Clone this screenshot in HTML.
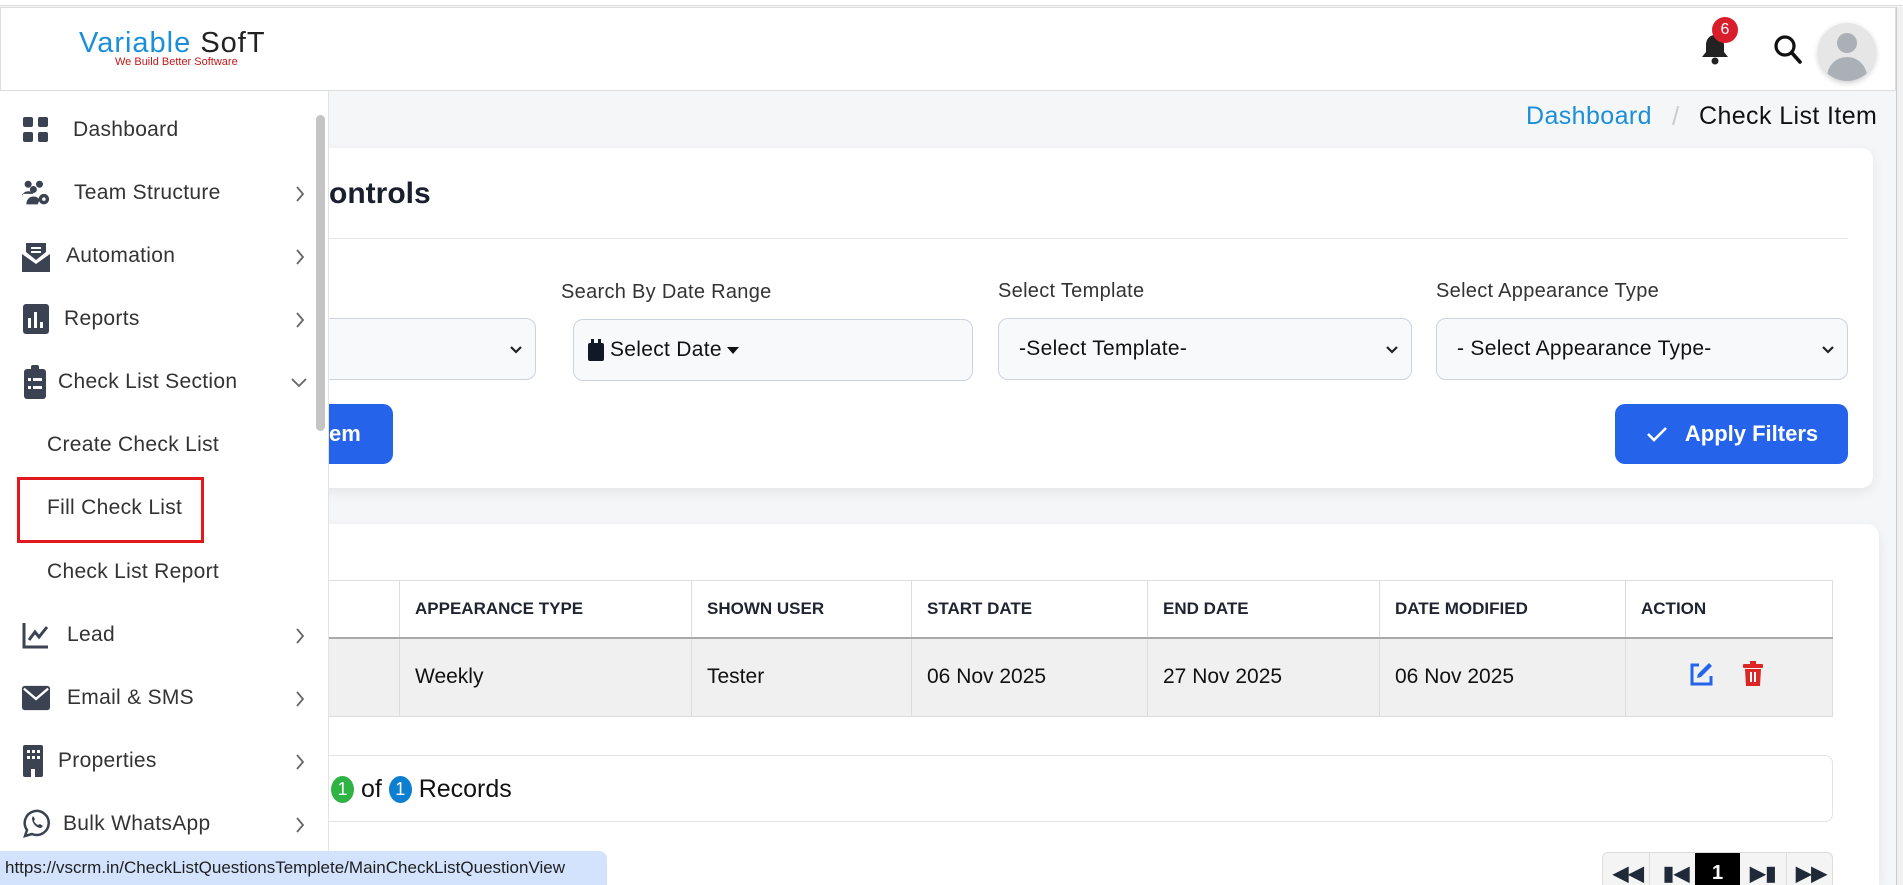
<!DOCTYPE html>
<html style="overflow:hidden;height:885px"><head><meta charset="utf-8"><style>
*{box-sizing:border-box;margin:0;padding:0}
body{width:1903px;height:885px;overflow:hidden;background:#f5f6f8;font-family:"Liberation Sans",sans-serif;position:relative;color:#1f2937}
.a{position:absolute}
.card{background:#fff;border-radius:12px;box-shadow:0 4px 12px rgba(0,0,0,.07)}
.lbl{font-size:20px;color:#333;letter-spacing:.3px}
.inp{background:#f8f9fb;border:1px solid #ccd3de;border-radius:10px;font-size:21px;color:#111;display:flex;align-items:center;padding-left:20px;letter-spacing:.3px}
.chev{position:absolute;right:12px;top:22px}
.side{font-size:21px;color:#333;letter-spacing:.3px}
.si{position:absolute;left:0;width:329px;height:40px;display:flex;align-items:center}
.si .ic{width:28px;margin-left:22px;margin-right:22px;display:flex;justify-content:center}
.si .ar{position:absolute;left:294px;top:12px}
th,td{border:1px solid #ddd;text-align:left}
th{font-size:17px;font-weight:bold;color:#1f2430;height:57px;padding-left:15px}
td{font-size:21px;color:#111;height:79px;padding-left:15px;background:#f0f0f0}
</style></head><body>
<div class="a" style="left:0;top:0;width:1903px;height:6px;background:#fff;border-bottom:1px solid #ddd"></div>
<div class="a" style="left:0;top:7px;width:1896px;height:84px;background:#fff;border:1px solid #ddd"></div>
<div class="a" style="left:79px;top:27px;font-size:29px;letter-spacing:1px"><span style="color:#1a8fd8">Variable</span> <span style="color:#222">SofT</span></div>
<div class="a" style="left:115px;top:56px;font-size:11px;color:#c01818">We Build Better Software</div>
<svg class="a" style="left:1700px;top:32px" width="30" height="34" viewBox="0 0 30 34"><path d="M15 3c-6 0-9 5-9 10v7l-4 5h26l-4-5v-7c0-5-3-10-9-10z" fill="#222"/><circle cx="15" cy="29" r="3.5" fill="#222"/></svg>
<div class="a" style="left:1712px;top:17px;width:26px;height:26px;border-radius:50%;background:#d81e2a;color:#fff;font-size:16px;text-align:center;line-height:26px">6</div>
<svg class="a" style="left:1773px;top:34px" width="30" height="32" viewBox="0 0 30 32"><circle cx="12" cy="12" r="9" fill="none" stroke="#111" stroke-width="3.2"/><path d="M19 19l8 9" stroke="#111" stroke-width="3.6" stroke-linecap="round"/></svg>
<div class="a" style="left:1818px;top:23px;width:58px;height:58px;border-radius:50%;background:#e6e6e6;box-shadow:0 2px 6px rgba(0,0,0,.2);overflow:hidden"><div class="a" style="left:19px;top:10px;width:20px;height:20px;border-radius:50%;background:#aab0b5"></div><div class="a" style="left:9px;top:34px;width:40px;height:26px;border-radius:20px 20px 0 0;background:#aab0b5"></div></div>
<div class="a" style="left:1896px;top:7px;width:7px;height:878px;background:#f0f0f0;border-left:1px solid #ccc"></div>
<div class="a" style="left:1526px;top:102px;font-size:25px;color:#1a8fd8;letter-spacing:.4px">Dashboard</div>
<div class="a" style="left:1672px;top:101px;font-size:26px;color:#ccc">/</div>
<div class="a" style="left:1699px;top:102px;font-size:25px;color:#111;letter-spacing:.4px">Check List Item</div>
<div class="a card" style="left:200px;top:148px;width:1673px;height:340px"></div>
<div class="a" style="left:329px;top:177px;font-size:30px;font-weight:bold;color:#1a1f2e">ontrols</div>
<div class="a" style="left:329px;top:238px;width:1519px;height:1px;background:#e3e6ea"></div>
<div class="a lbl" style="left:561px;top:281px">Search By Date Range</div>
<div class="a lbl" style="left:998px;top:280px">Select Template</div>
<div class="a lbl" style="left:1436px;top:280px">Select Appearance Type</div>
<div class="a inp" style="left:250px;top:318px;width:286px;height:62px"><svg class="chev" width="14" height="18" viewBox="0 0 14 18"><path d="M2 6l5 5 5-5" fill="none" stroke="#222" stroke-width="2.2"/></svg></div>
<div class="a inp" style="left:573px;top:319px;width:400px;height:62px;padding-left:14px"><svg width="16" height="22" viewBox="0 0 16 22" style="margin-right:6px"><rect x="0" y="4" width="16" height="18" rx="2" fill="#111827"/><rect x="3" y="0" width="3" height="6" fill="#111827"/><rect x="10" y="0" width="3" height="6" fill="#111827"/></svg>Select Date<svg width="16" height="12" viewBox="0 0 16 12" style="margin-left:4px"><path d="M1 3h12l-6 7z" fill="#111"/></svg></div>
<div class="a inp" style="left:998px;top:318px;width:414px;height:62px">-Select Template-<svg class="chev" width="14" height="18" viewBox="0 0 14 18"><path d="M2 6l5 5 5-5" fill="none" stroke="#222" stroke-width="2.2"/></svg></div>
<div class="a inp" style="left:1436px;top:318px;width:412px;height:62px">- Select Appearance Type-<svg class="chev" width="14" height="18" viewBox="0 0 14 18"><path d="M2 6l5 5 5-5" fill="none" stroke="#222" stroke-width="2.2"/></svg></div>
<div class="a" style="left:250px;top:404px;width:143px;height:60px;background:#2563eb;border-radius:10px;color:#fff;font-size:22px;font-weight:bold;line-height:60px;padding-left:79px">em</div>
<div class="a" style="left:1615px;top:404px;width:233px;height:60px;background:#2563eb;border-radius:10px;color:#fff;font-size:22px;font-weight:bold;display:flex;align-items:center;justify-content:center"><svg width="24" height="20" viewBox="0 0 24 20" style="margin-right:16px"><path d="M3 10l6 6L21 4" fill="none" stroke="#fff" stroke-width="2.6"/></svg>Apply Filters</div>
<div class="a card" style="left:200px;top:524px;width:1679px;height:361px;border-radius:12px 12px 0 0"></div>
<table class="a" style="left:250px;top:580px;width:1583px;border-collapse:collapse">
<tr><th style="width:149px"></th><th style="width:292px">APPEARANCE TYPE</th><th style="width:220px">SHOWN USER</th><th style="width:236px">START DATE</th><th style="width:232px">END DATE</th><th style="width:246px">DATE MODIFIED</th><th>ACTION</th></tr>
<tr><td style="border-top:2px solid #aaa"></td><td style="border-top:2px solid #aaa">Weekly</td><td style="border-top:2px solid #aaa">Tester</td><td style="border-top:2px solid #aaa">06 Nov 2025</td><td style="border-top:2px solid #aaa">27 Nov 2025</td><td style="border-top:2px solid #aaa">06 Nov 2025</td><td style="border-top:2px solid #aaa;padding-left:62px"><svg width="26" height="26" viewBox="0 0 26 26"><path d="M11 4H4v19h19v-8" fill="none" stroke="#2563eb" stroke-width="3"/><path d="M21 2l3 3-11 11-4 1 1-4z" fill="#2563eb"/></svg><svg width="24" height="26" viewBox="0 0 24 26" style="margin-left:28px"><rect x="1" y="3" width="20" height="4" rx="1" fill="#dc2626"/><rect x="8" y="0" width="6" height="4" fill="#dc2626"/><path d="M3 8h16l-1 17H4z" fill="#dc2626"/><rect x="8" y="11" width="2" height="10" fill="#fff"/><rect x="12" y="11" width="2" height="10" fill="#fff"/></svg></td></tr>
</table>
<div class="a" style="left:250px;top:755px;width:1583px;height:67px;border:1px solid #e3e3e3;border-radius:8px;background:#fff"></div>
<div class="a" style="left:331px;top:775px;font-size:25px;color:#111;display:flex;align-items:center"><span style="display:inline-block;width:23px;height:27px;border-radius:50%;background:#2fb344;color:#fff;font-size:18px;text-align:center;line-height:27px">1</span>&nbsp;of&nbsp;<span style="display:inline-block;width:23px;height:27px;border-radius:50%;background:#0d7fd0;color:#fff;font-size:18px;text-align:center;line-height:27px">1</span>&nbsp;Records</div>
<div class="a" style="left:1602px;top:852px;width:231px;height:40px;border:1px solid #ddd;border-radius:6px;background:#f4f4f4;font-size:20px;font-weight:bold">
<span class="a" style="left:10px;top:8px">◀◀</span><span class="a" style="left:46px;top:0;width:1px;height:40px;background:#ddd"></span><span class="a" style="left:60px;top:8px">▮◀</span><div class="a" style="left:92px;top:0;width:45px;height:40px;background:#000;color:#fff;text-align:center;line-height:40px">1</div><span class="a" style="left:147px;top:8px">▶▮</span><span class="a" style="left:183px;top:0;width:1px;height:40px;background:#ddd"></span><span class="a" style="left:193px;top:8px">▶▶</span></div>
<div class="a side" style="left:0;top:91px;width:329px;height:794px;background:#fff;border-right:1px solid #e3e3e3">
<div class="a" style="left:316px;top:24px;width:9px;height:316px;border-radius:5px;background:#c4c4c4"></div>
<div class="si" style="top:19px"><span class="ic" style="margin-right:23px"><svg width="28" height="28" viewBox="0 0 28 28" fill="#3b4252"><rect x="1" y="1" width="10" height="10" rx="2"/><rect x="16" y="1" width="10" height="10" rx="2"/><rect x="1" y="16" width="10" height="10" rx="2"/><rect x="16" y="16" width="10" height="10" rx="2"/></svg></span>Dashboard</div>
<div class="si" style="top:82px"><span class="ic" style="margin-right:24px"><svg width="38" height="32" viewBox="0 0 32 30" fill="#3b4252"><circle cx="7" cy="5" r="4"/><circle cx="20" cy="5" r="4"/><circle cx="13" cy="11" r="4"/><path d="M0 20c0-5 4-7 7-7s5 1 6 3H0zM5 28c0-6 4-9 8-9s6 2 7 4l-2 5z"/><circle cx="25" cy="22" r="6"/><circle cx="25" cy="22" r="2" fill="#fff"/></svg></span>Team Structure<svg class="ar" width="12" height="18" viewBox="0 0 12 18"><path d="M3 2l6 7-6 7" fill="none" stroke="#666" stroke-width="1.8"/></svg></div>
<div class="si" style="top:145px"><span class="ic" style="margin-right:16px"><svg width="30" height="34" viewBox="0 0 28 32" fill="#3b4252"><path d="M0 14l14 10 14-10v18H0z"/><path d="M4 12V3h20v9l-10 8z"/><rect x="9" y="7" width="10" height="2" fill="#fff"/><rect x="9" y="11" width="10" height="2" fill="#fff"/></svg></span>Automation<svg class="ar" width="12" height="18" viewBox="0 0 12 18"><path d="M3 2l6 7-6 7" fill="none" stroke="#666" stroke-width="1.8"/></svg></div>
<div class="si" style="top:208px"><span class="ic" style="margin-right:14px"><svg width="26" height="30" viewBox="0 0 26 30" fill="#3b4252"><rect x="0" y="0" width="26" height="30" rx="3"/><rect x="5" y="14" width="3" height="10" fill="#fff"/><rect x="11" y="8" width="3" height="16" fill="#fff"/><rect x="17" y="18" width="3" height="6" fill="#fff"/></svg></span>Reports<svg class="ar" width="12" height="18" viewBox="0 0 12 18"><path d="M3 2l6 7-6 7" fill="none" stroke="#666" stroke-width="1.8"/></svg></div>
<div class="si" style="top:271px"><span class="ic" style="margin-right:10px;width:26px"><svg width="22" height="34" viewBox="0 0 22 34" fill="#3b4252"><rect x="0" y="4" width="22" height="30" rx="3"/><rect x="7" y="0" width="8" height="6" rx="2"/><rect x="4" y="13" width="3" height="3" fill="#fff"/><rect x="9" y="13" width="9" height="3" fill="#fff"/><rect x="4" y="21" width="3" height="3" fill="#fff"/><rect x="9" y="21" width="9" height="3" fill="#fff"/></svg></span>Check List Section<svg class="ar" width="18" height="14" viewBox="0 0 18 14" style="left:290px;top:14px"><path d="M2 3l7 7 7-7" fill="none" stroke="#666" stroke-width="1.8"/></svg></div>
<div class="si" style="top:334px;padding-left:47px">Create Check List</div>
<div class="si" style="top:397px;padding-left:47px">Fill Check List</div>
<div class="a" style="left:17px;top:386px;width:187px;height:66px;border:3px solid #e0191e"></div>
<div class="si" style="top:461px;padding-left:47px">Check List Report</div>
<div class="si" style="top:524px"><span class="ic" style="margin-right:17px"><svg width="28" height="28" viewBox="0 0 28 28"><path d="M2 2v24h24" fill="none" stroke="#3b4252" stroke-width="3"/><path d="M7 19l6-8 4 5 8-10" fill="none" stroke="#3b4252" stroke-width="3"/></svg></span>Lead<svg class="ar" width="12" height="18" viewBox="0 0 12 18"><path d="M3 2l6 7-6 7" fill="none" stroke="#666" stroke-width="1.8"/></svg></div>
<div class="si" style="top:587px"><span class="ic" style="margin-right:17px"><svg width="30" height="26" viewBox="0 0 30 26" fill="#3b4252"><rect x="0" y="0" width="30" height="26" rx="3"/><path d="M2 3l13 11 13-11" fill="none" stroke="#fff" stroke-width="2.5"/></svg></span>Email &amp; SMS<svg class="ar" width="12" height="18" viewBox="0 0 12 18"><path d="M3 2l6 7-6 7" fill="none" stroke="#666" stroke-width="1.8"/></svg></div>
<div class="si" style="top:650px"><span class="ic" style="margin-right:14px;width:22px"><svg width="20" height="32" viewBox="0 0 20 32" fill="#3b4252"><rect x="0" y="0" width="20" height="32" rx="2"/><g fill="#fff"><rect x="4" y="5" width="3" height="3"/><rect x="9" y="5" width="3" height="3"/><rect x="14" y="5" width="3" height="3"/><rect x="4" y="11" width="3" height="3"/><rect x="9" y="11" width="3" height="3"/><rect x="14" y="11" width="3" height="3"/><rect x="8" y="24" width="4" height="8"/></g></svg></span>Properties<svg class="ar" width="12" height="18" viewBox="0 0 12 18"><path d="M3 2l6 7-6 7" fill="none" stroke="#666" stroke-width="1.8"/></svg></div>
<div class="si" style="top:713px"><span class="ic" style="margin-right:13px"><svg width="28" height="30" viewBox="0 0 28 30"><path d="M3 27l2-6a12 12 0 1 1 5 4z" fill="none" stroke="#3b4252" stroke-width="2.5"/><path d="M10 9c0 5 4 10 9 10l2-2-3-2-2 1c-2-1-3-2-4-4l1-2-2-3z" fill="#3b4252"/></svg></span>Bulk WhatsApp<svg class="ar" width="12" height="18" viewBox="0 0 12 18"><path d="M3 2l6 7-6 7" fill="none" stroke="#666" stroke-width="1.8"/></svg></div>
</div>
<div class="a" style="left:0;top:851px;width:607px;height:34px;background:#d3e3fd;border-radius:0 8px 0 0;font-size:17px;color:#1f1f1f;line-height:34px;padding-left:5px">https://vscrm.in/CheckListQuestionsTemplete/MainCheckListQuestionView</div>
</body></html>
